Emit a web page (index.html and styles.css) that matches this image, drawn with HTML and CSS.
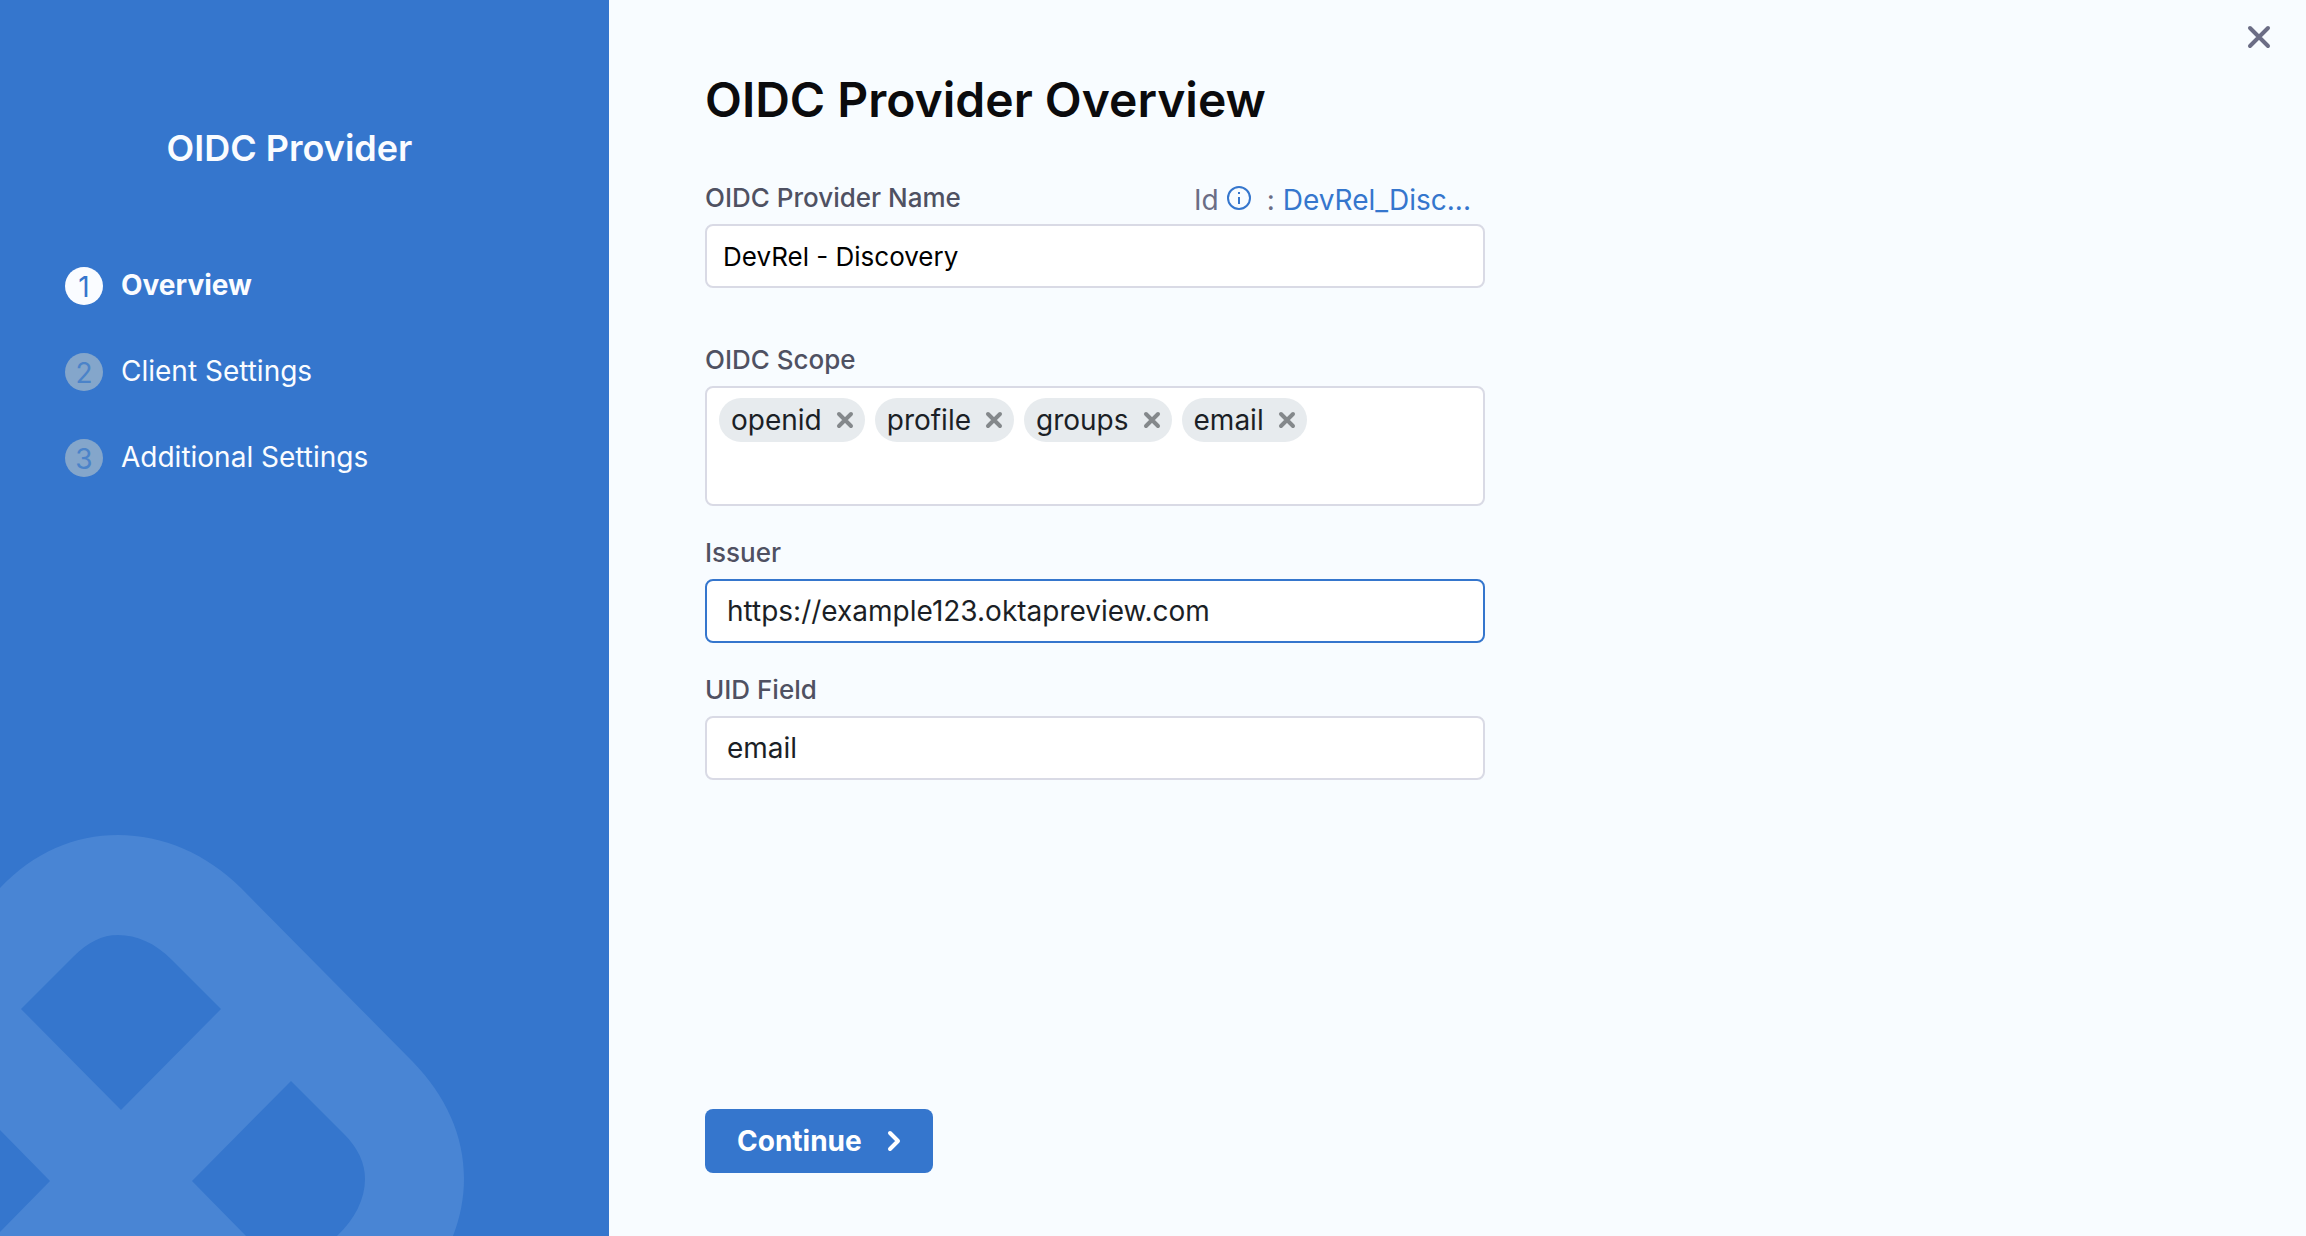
FILE: index.html
```html
<!DOCTYPE html>
<html lang="en">
<head>
<meta charset="utf-8">
<meta name="viewport" content="width=device-width, initial-scale=1">
<title>OIDC Provider Overview</title>
<link rel="stylesheet" href="styles.css">
</head>
<body>
<div class="wizard">
  <aside class="sidebar">
    <h2 class="sidebar-title">OIDC Provider</h2>
    <ol class="steps">
      <li class="step step-active" aria-current="step"><span class="step-number">1</span><span class="step-name">Overview</span></li>
      <li class="step"><span class="step-number">2</span><span class="step-name">Client Settings</span></li>
      <li class="step"><span class="step-number">3</span><span class="step-name">Additional Settings</span></li>
    </ol>
    <svg class="sidebar-logo" viewBox="0 0 465 401" width="465" height="401" aria-hidden="true">
      <path fill-rule="evenodd" d="M0 53C34 17 75 0 118 0C163 0 207 19 241 53L413 227C446 261 464 301 464 343C464 364 460 383 453 401H337C355 384 365 364 365 344C365 328 358 313 344 299L291 246L192 346L246 401H0V397L50 346L0 295ZM21 174L121 275L221 174L172 125C155 108 137 100 118 100C102 100 88 107 73 122Z"/>
    </svg>
  </aside>

  <main class="content">
    <button class="close" type="button" aria-label="Close">
      <svg viewBox="0 0 24 24" width="24" height="24" aria-hidden="true"><path d="M3 3L21 21M21 3L3 21"/></svg>
    </button>
    <form class="form">
      <h1 class="title">OIDC Provider Overview</h1>

      <div class="field field-name">
        <div class="label-row">
          <label class="label" for="name">OIDC Provider Name</label>
          <div class="identifier">
            <span>Id</span>
            <svg class="info" viewBox="0 0 24 24" width="24" height="24" aria-hidden="true"><circle cx="12" cy="12" r="11"/><path d="M12 11V18M12 6V8"/></svg>
            <span class="identifier-colon">:</span>
            <a class="identifier-link" href="#">DevRel_Disc...</a>
          </div>
        </div>
        <input class="input input-name" id="name" type="text" value="DevRel - Discovery">
      </div>

      <div class="field">
        <label class="label" for="scope">OIDC Scope</label>
        <div class="tags">
          <span class="tag">openid<button class="tag-remove" type="button" aria-label="Remove openid"><svg viewBox="0 0 18 18" width="18" height="18" aria-hidden="true"><path d="M3 3L15 15M15 3L3 15"/></svg></button></span>
          <span class="tag">profile<button class="tag-remove" type="button" aria-label="Remove profile"><svg viewBox="0 0 18 18" width="18" height="18" aria-hidden="true"><path d="M3 3L15 15M15 3L3 15"/></svg></button></span>
          <span class="tag">groups<button class="tag-remove" type="button" aria-label="Remove groups"><svg viewBox="0 0 18 18" width="18" height="18" aria-hidden="true"><path d="M3 3L15 15M15 3L3 15"/></svg></button></span>
          <span class="tag">email<button class="tag-remove" type="button" aria-label="Remove email"><svg viewBox="0 0 18 18" width="18" height="18" aria-hidden="true"><path d="M3 3L15 15M15 3L3 15"/></svg></button></span>
          <input class="tag-input" id="scope" type="text">
        </div>
      </div>

      <div class="field">
        <label class="label" for="issuer">Issuer</label>
        <input class="input input-active" id="issuer" type="text" value="https://example123.oktapreview.com">
      </div>

      <div class="field">
        <label class="label" for="uid">UID Field</label>
        <input class="input" id="uid" type="text" value="email">
      </div>

      <button class="continue" type="button">Continue
        <svg viewBox="0 0 14 22" width="14" height="22" aria-hidden="true"><path d="M3 3L11 11L3 19"/></svg>
      </button>
    </form>
  </main>
</div>
</body>
</html>
```
FILE: styles.css
```css
*, *::before, *::after {
  box-sizing: border-box;
}

body {
  margin: 0;
  background: #f8fcff;
  color: #1b1f26;
  font-family: Inter, "Liberation Sans", sans-serif;
  font-size: 28px;
  line-height: 36px;
}

h1, h2, ol {
  margin: 0;
  padding: 0;
}

button, input {
  font: inherit;
  color: inherit;
}

button {
  padding: 0;
  border: 0;
  background: none;
  cursor: pointer;
}

svg {
  display: block;
  fill: none;
}

.wizard {
  display: flex;
  min-height: 100vh;
}

/* Sidebar */
.sidebar {
  display: flex;
  flex-direction: column;
  flex: 0 0 609px;
  padding-top: 124px;
  background: #3576cd;
  color: #fafcff;
}

.sidebar-title {
  padding: 0 95px 0 65px;
  font-size: 36px;
  font-weight: 600;
  line-height: 48px;
  text-align: center;
}

.steps {
  display: flex;
  flex-direction: column;
  gap: 48px;
  padding: 95px 65px 0;
  list-style: none;
}

.step {
  display: flex;
  align-items: flex-start;
  gap: 18px;
  height: 38px;
}

.step-number {
  width: 38px;
  height: 38px;
  border-radius: 50%;
  background: #84a6cb;
  color: #4b83c9;
  line-height: 40px;
  text-align: center;
}

.step-active .step-number {
  background: #fafcff;
  color: #3576cd;
}

.step-active .step-name {
  font-weight: 700;
}

.sidebar-logo {
  margin-top: auto;
  fill: #4985d4;
}

/* Form */
.content {
  position: relative;
  display: flex;
  flex: 1;
  min-width: 0;
  padding: 72px 96px 63px;
}

.close {
  position: absolute;
  top: 25px;
  right: 35px;
  stroke: #6b6d85;
  stroke-width: 4;
  stroke-linecap: round;
}

.form {
  display: flex;
  flex-direction: column;
  width: 100%;
  max-width: 780px;
}

.title {
  margin-bottom: 52px;
  color: #0b0b0d;
  font-size: 48px;
  font-weight: 600;
  line-height: 56px;
}

.field {
  display: flex;
  flex-direction: column;
  gap: 8px;
  margin-bottom: 29px;
}

.field-name {
  margin-bottom: 54px;
}

.label-row {
  display: flex;
  justify-content: space-between;
}

.label {
  color: #4f5162;
  font-size: 26px;
  font-weight: 500;
  line-height: 36px;
}

.identifier {
  display: flex;
  height: 36px;
  padding-right: 14px;
  color: #6b6d85;
  line-height: 40px;
}

.info {
  margin: 6px 16px 0 8px;
  stroke: #3576cd;
  stroke-width: 2;
}

.identifier-link {
  margin-left: 8px;
  color: #3576cd;
  text-decoration: none;
}

.input {
  width: 100%;
  height: 64px;
  padding: 0 20px;
  border: 2px solid #d9dae5;
  border-radius: 8px;
  outline: none;
  background: #fff;
}

.input-name {
  padding: 0 16px;
  color: #000;
  font-size: 26px;
}

.input-active {
  border-color: #3576cd;
}

.tags {
  display: flex;
  flex-wrap: wrap;
  align-content: flex-start;
  gap: 10px;
  min-height: 120px;
  padding: 10px 12px;
  border: 2px solid #d9dae5;
  border-radius: 8px;
  background: #fff;
}

.tag {
  display: flex;
  align-items: center;
  gap: 14px;
  height: 44px;
  padding: 0 11px 0 12px;
  border-radius: 22px;
  background: #e7ebee;
}

.tag-remove {
  stroke: #84888b;
  stroke-width: 4;
  stroke-linecap: round;
}

.tag-input {
  flex: 1;
  min-width: 40px;
  height: 44px;
  padding: 0;
  border: 0;
  outline: none;
  background: transparent;
}

.continue {
  display: flex;
  align-items: center;
  justify-content: space-between;
  align-self: flex-start;
  gap: 16px;
  min-width: 228px;
  height: 64px;
  margin-top: auto;
  padding: 0 32px;
  border-radius: 8px;
  background: #3576cd;
  color: #fff;
  font-weight: 700;
  stroke: #fff;
  stroke-width: 4;
  stroke-linecap: round;
  stroke-linejoin: round;
}
```
